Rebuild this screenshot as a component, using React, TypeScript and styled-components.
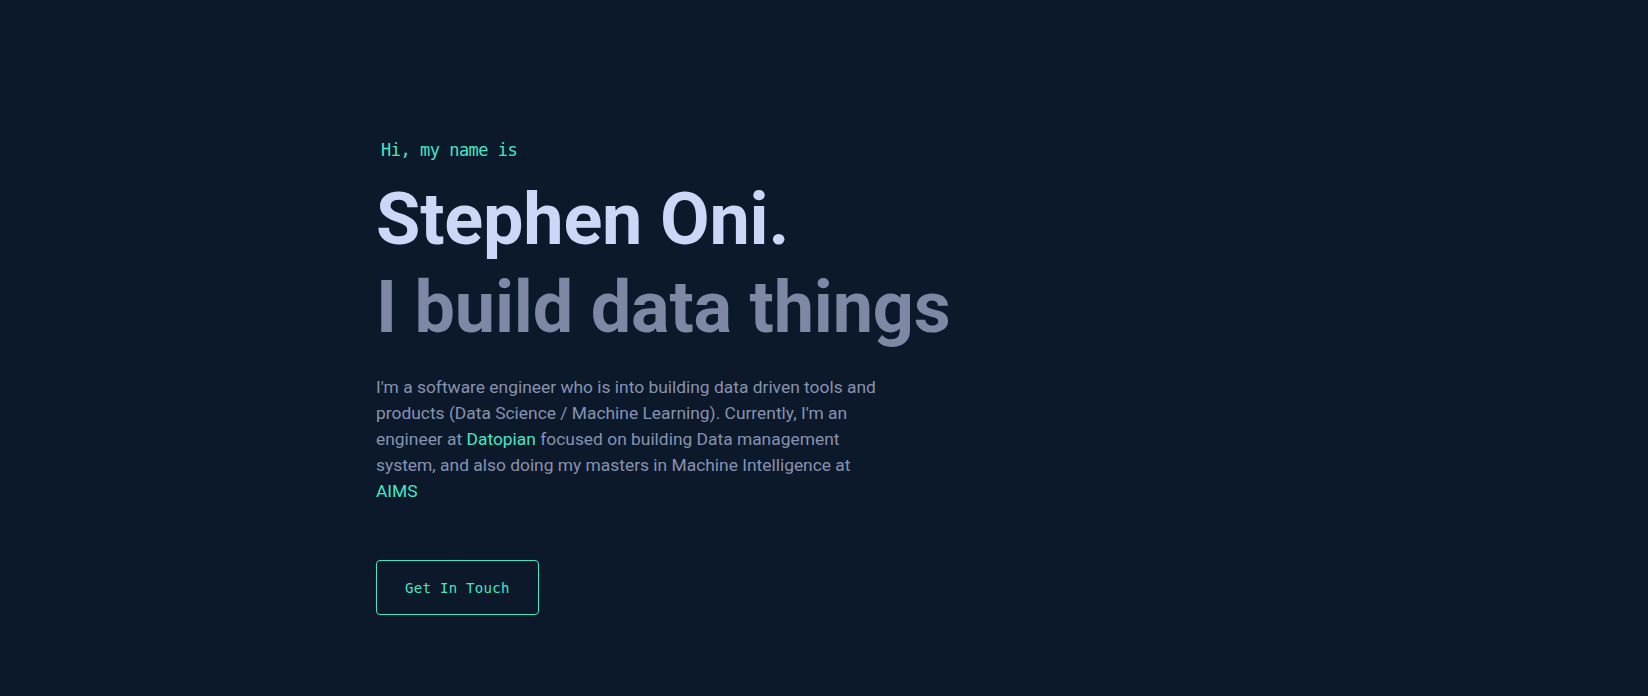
import React from "react";
import styled, { createGlobalStyle } from "styled-components";

const GlobalStyle = createGlobalStyle`
  html, body {
    margin: 0;
    padding: 0;
    background: #0b192b;
  }
  body {
    font-family: Roboto, "Liberation Sans", sans-serif;
    -webkit-font-smoothing: antialiased;
  }
  * { box-sizing: border-box; }
`;

const Page = styled.main`
  min-height: 100vh;
  background: #0b192b;
`;

const Hero = styled.section`
  display: flex;
  flex-direction: column;
  align-items: flex-start;
  padding: 140px 0 0 376px;
`;

const Greeting = styled.h1`
  margin: 0 0 16px 5px;
  font-family: "DejaVu Sans Mono", "Liberation Mono", monospace;
  font-size: 17px;
  font-weight: 400;
  line-height: 20px;
  letter-spacing: -0.5px;
  color: #45e6c4;
`;

const BigHeading = styled.h2<{ $muted?: boolean }>`
  margin: 0;
  font-family: Roboto, "Liberation Sans", sans-serif;
  font-size: 72px;
  font-weight: 700;
  line-height: 88px;
  letter-spacing: -0.2px;
  color: ${(p) => (p.$muted ? "#7e88a5" : "#ccd6f6")};
`;

const Intro = styled.p`
  margin: 22px 0 0 0;
  max-width: 508px;
  font-family: Roboto, "Liberation Sans", sans-serif;
  font-size: 17.4px;
  line-height: 26px;
  color: #8892b0;
`;

const Link = styled.a`
  color: #45e6c4;
  text-decoration: none;
`;

const Button = styled.a`
  display: inline-block;
  margin-top: 56px;
  padding: 20px 28px 18px;
  border: 1px solid #45e6c4;
  border-radius: 4px;
  font-family: "DejaVu Sans Mono", "Liberation Mono", monospace;
  font-size: 14px;
  line-height: 15px;
  letter-spacing: 0.3px;
  color: #45e6c4;
  text-decoration: none;
  background: transparent;
`;

export default function App() {
  return (
    <>
      <GlobalStyle />
      <Page>
        <Hero>
          <Greeting>Hi, my name is</Greeting>
          <BigHeading>Stephen Oni.</BigHeading>
          <BigHeading $muted>I build data things</BigHeading>
          <Intro>
            I'm a software engineer who is into building data driven tools and
            products (Data Science / Machine Learning). Currently, I'm an
            engineer at <Link href="#">Datopian</Link> focused on building Data
            management system, and also doing my masters in Machine
            Intelligence at <Link href="#">AIMS</Link>
          </Intro>
          <Button href="#">Get In Touch</Button>
        </Hero>
      </Page>
    </>
  );
}
